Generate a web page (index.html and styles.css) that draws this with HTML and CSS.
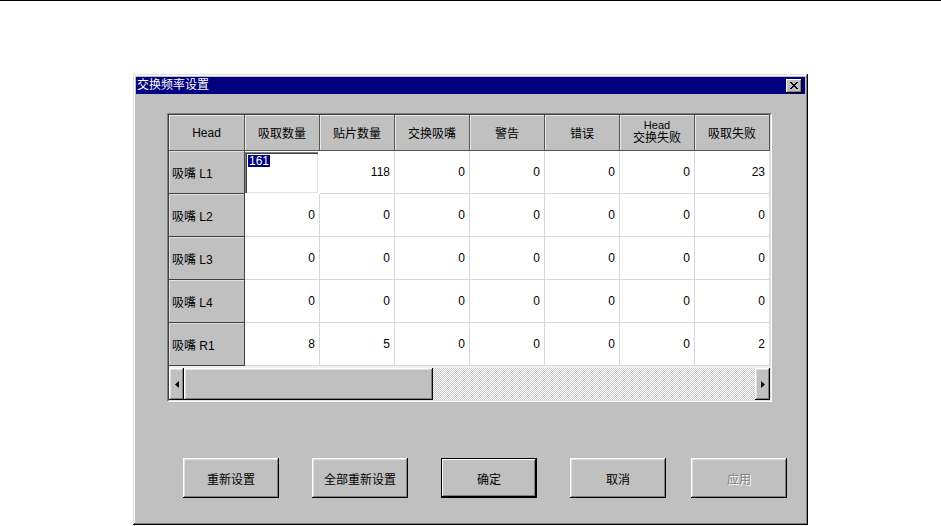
FILE: index.html
```html
<!DOCTYPE html>
<html lang="zh-CN">
<head>
    <meta charset="UTF-8">
    <title>交换频率设置</title>
    <link rel="stylesheet" href="styles.css">
</head>
<body>
    <div class="topline"></div>
    <div class="dialog">
        <div class="titlebar">
            <span class="title">交换频率设置</span>
            <span class="close">
                <svg width="8" height="7" viewBox="0 0 8 7"><path d="M0 0L7 7M1 0L8 7M7 0L0 7M8 0L1 7" stroke="#000" stroke-width="1" fill="none"/></svg>
            </span>
        </div>
        <div class="dialog-body">
            <div class="grid">
                <div class="grid-in">
                    <div class="sheet">
                        <div class="hd">Head</div>
                        <div class="hd">吸取数量</div>
                        <div class="hd">贴片数量</div>
                        <div class="hd">交换吸嘴</div>
                        <div class="hd">警告</div>
                        <div class="hd">错误</div>
                        <div class="hd two"><span>Head</span><span>交换失败</span></div>
                        <div class="hd">吸取失败</div>

                        <div class="rh">吸嘴 L1</div>
                        <div class="cell edit"><span class="sel">161</span></div>
                        <div class="cell">118</div>
                        <div class="cell">0</div>
                        <div class="cell">0</div>
                        <div class="cell">0</div>
                        <div class="cell">0</div>
                        <div class="cell">23</div>

                        <div class="rh">吸嘴 L2</div>
                        <div class="cell">0</div>
                        <div class="cell">0</div>
                        <div class="cell">0</div>
                        <div class="cell">0</div>
                        <div class="cell">0</div>
                        <div class="cell">0</div>
                        <div class="cell">0</div>

                        <div class="rh">吸嘴 L3</div>
                        <div class="cell">0</div>
                        <div class="cell">0</div>
                        <div class="cell">0</div>
                        <div class="cell">0</div>
                        <div class="cell">0</div>
                        <div class="cell">0</div>
                        <div class="cell">0</div>

                        <div class="rh">吸嘴 L4</div>
                        <div class="cell">0</div>
                        <div class="cell">0</div>
                        <div class="cell">0</div>
                        <div class="cell">0</div>
                        <div class="cell">0</div>
                        <div class="cell">0</div>
                        <div class="cell">0</div>

                        <div class="rh">吸嘴 R1</div>
                        <div class="cell">8</div>
                        <div class="cell">5</div>
                        <div class="cell">0</div>
                        <div class="cell">0</div>
                        <div class="cell">0</div>
                        <div class="cell">0</div>
                        <div class="cell">2</div>
                    </div>
                    <div class="hscroll">
                        <div class="sb-btn">
                            <svg width="4" height="7" viewBox="0 0 4 7"><path d="M4 0L0 3.5L4 7Z" fill="#000"/></svg>
                        </div>
                        <div class="sb-thumb"></div>
                        <div class="sb-track"></div>
                        <div class="sb-btn">
                            <svg width="4" height="7" viewBox="0 0 4 7"><path d="M0 0L4 3.5L0 7Z" fill="#000"/></svg>
                        </div>
                    </div>
                </div>
            </div>
            <div class="buttons">
                <button class="btn">重新设置</button>
                <button class="btn">全部重新设置</button>
                <button class="btn default">确定</button>
                <button class="btn">取消</button>
                <button class="btn disabled">应用</button>
            </div>
        </div>
    </div>
</body>
</html>
```

FILE: styles.css
```css
body {
    margin: 0;
    background: #fff;
    font-family: "Liberation Sans", "Noto Sans CJK SC", sans-serif;
    font-size: 12px;
    color: #000;
    overflow: hidden;
}
.topline {
    height: 1px;
    background: #000;
}
.dialog {
    box-sizing: border-box;
    width: 675px;
    height: 451px;
    margin: 73px 0 0 133px;
    padding: 3px;
    background: #c0c0c0;
    box-shadow: inset -1px -1px #000, inset 1px 1px #dfdfdf, inset -2px -2px #808080, inset 2px 2px #fff;
}
.titlebar {
    height: 17px;
    background: #000080;
    color: #fff;
    display: flex;
    align-items: center;
    justify-content: space-between;
    padding: 0 3px 0 1px;
}
.title {
    font-size: 12px;
    line-height: 17px;
}
.close {
    width: 16px;
    height: 14px;
    background: #c0c0c0;
    display: flex;
    align-items: center;
    justify-content: center;
    box-shadow: inset -1px -1px #000, inset 1px 1px #fff, inset -2px -2px #808080;
}
.dialog-body {
    padding: 19px 0 0 31px;
}
.grid {
    width: 605px;
    box-sizing: border-box;
    border: 1px solid;
    border-color: #808080 #fff #fff #808080;
}
.grid-in {
    border: 1px solid;
    border-color: #404040 #dfdfdf #dfdfdf #404040;
    background: #f0f0f0;
    overflow: hidden;
}
.sheet {
    display: grid;
    grid-template-columns: 76px repeat(7, 75px);
    grid-template-rows: 36px repeat(5, 43px);
    background: #fff;
}
.hd, .rh, .cell {
    box-sizing: border-box;
    display: flex;
    align-items: center;
}
.hd {
    justify-content: center;
    text-align: center;
    background: #c0c0c0;
    border-right: 1px solid #555;
    border-bottom: 1px solid #555;
    box-shadow: inset 1px 1px #e8e8e8;
}
.hd.two {
    flex-direction: column;
    line-height: 14px;
}
.hd.two span:first-child {
    font-size: 11px;
    line-height: 11px;
}
.rh {
    background: #c0c0c0;
    padding-left: 3px;
    border-right: 1px solid #404040;
    border-bottom: 1px solid #404040;
    box-shadow: inset 1px 1px #e0e0e0;
}
.cell {
    justify-content: flex-end;
    padding-right: 4px;
    border-right: 1px solid #d8d8d8;
    border-bottom: 1px solid #d8d8d8;
}
.cell.edit {
    align-items: flex-start;
    justify-content: flex-start;
    padding: 3px 0 0 3px;
    margin: 1px 2px 1px 0;
    border: none;
    box-shadow: inset 1px 1px #808080, inset 2px 2px #404040, inset -1px -1px #dfdfdf;
}
.sel {
    background: #000080;
    color: #fff;
    line-height: 12px;
    padding: 0 1px;
}
.hscroll {
    display: flex;
    height: 32px;
    margin-top: 2px;
}
.sb-btn, .sb-thumb {
    background: #c0c0c0;
    box-shadow: inset -1px -1px #000, inset 1px 1px #fff, inset -2px -2px #808080, inset 2px 2px #dfdfdf;
}
.sb-btn {
    width: 15px;
    display: flex;
    align-items: center;
    justify-content: center;
}
.sb-thumb {
    width: 249px;
}
.sb-track {
    flex: 1;
    background: repeating-conic-gradient(#fff 0 25%, #c8c8c8 0 50%) 0 0 / 2px 2px;
}
.buttons {
    display: flex;
    gap: 33px;
    margin: 56px 0 0 16px;
}
.btn {
    width: 96px;
    height: 40px;
    padding: 0;
    border: none;
    background: #c0c0c0;
    font-family: "Noto Sans CJK SC", sans-serif;
    font-size: 12px;
    color: #000;
    box-shadow: inset -1px -1px #000, inset 1px 1px #fff, inset -2px -2px #808080, inset 2px 2px #dfdfdf;
}
.btn.default {
    box-shadow: inset 0 0 0 1px #000, inset -2px -2px #000, inset 2px 2px #fff, inset -3px -3px #808080;
}
.btn.disabled {
    margin-left: -8px;
    color: #808080;
    text-shadow: 1px 1px #fff;
}
```
